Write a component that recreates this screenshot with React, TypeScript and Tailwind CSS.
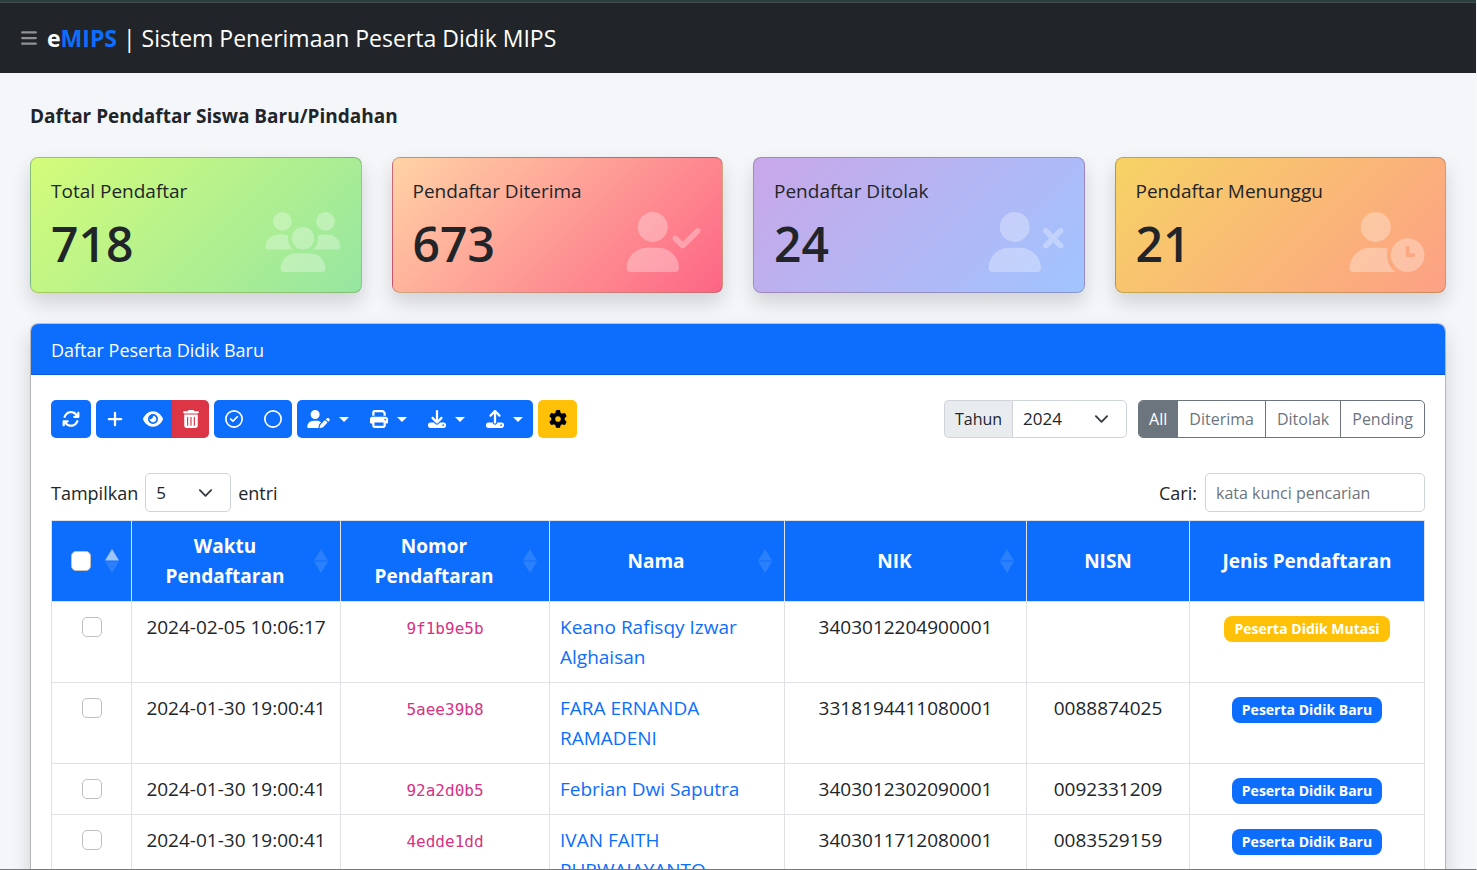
import type { ReactNode } from "react";
import type { IconType } from "react-icons";
import {
  FaArrowsRotate,
  FaBars,
  FaDownload,
  FaEye,
  FaGear,
  FaPlus,
  FaPrint,
  FaRegCircle,
  FaRegCircleCheck,
  FaTrashCan,
  FaUpload,
  FaUserCheck,
  FaUserClock,
  FaUserPen,
  FaUsers,
  FaUserXmark,
} from "react-icons/fa6";

type Stat = { label: string; value: number; icon: IconType; gradient: string };

const stats: Stat[] = [
  { label: "Total Pendaftar", value: 718, icon: FaUsers, gradient: "bg-[linear-gradient(135deg,#d4fc79,#96e6a1)]" },
  { label: "Pendaftar Diterima", value: 673, icon: FaUserCheck, gradient: "bg-[linear-gradient(135deg,#ffd3a5,#fd6585)]" },
  { label: "Pendaftar Ditolak", value: 24, icon: FaUserXmark, gradient: "bg-[linear-gradient(135deg,#c9a7e8,#a0c4ff)]" },
  { label: "Pendaftar Menunggu", value: 21, icon: FaUserClock, gradient: "bg-[linear-gradient(135deg,#f6d365,#fda085)]" },
];

type Row = { time: string; code: string; name: string; nik: string; nisn: string; transfer?: boolean };

const rows: Row[] = [
  { time: "2024-02-05 10:06:17", code: "9f1b9e5b", name: "Keano Rafisqy Izwar Alghaisan", nik: "3403012204900001", nisn: "", transfer: true },
  { time: "2024-01-30 19:00:41", code: "5aee39b8", name: "FARA ERNANDA RAMADENI", nik: "3318194411080001", nisn: "0088874025" },
  { time: "2024-01-30 19:00:41", code: "92a2d0b5", name: "Febrian Dwi Saputra", nik: "3403012302090001", nisn: "0092331209" },
  { time: "2024-01-30 19:00:41", code: "4edde1dd", name: "IVAN FAITH PURWAJAYANTO", nik: "3403011712080001", nisn: "0083529159" },
];

function StatCard({ label, value, icon: Icon, gradient }: Stat) {
  return (
    <section
      className={`flex items-end justify-between rounded-lg border border-black/20 p-5 shadow-[0_10px_20px_rgba(0,0,0,0.15)] ${gradient}`}
    >
      <div>
        <h2 className="text-[19px] leading-[26px] font-medium">{label}</h2>
        <p className="mt-3 text-[48px] leading-[56px] font-semibold">{value}</p>
      </div>
      <Icon className="h-[60px] w-[76px] text-white opacity-30" />
    </section>
  );
}

function ToolButton({
  label,
  icon: Icon,
  className = "w-[38px] bg-[#0d6efd] text-white",
  iconWidth = "w-[18px]",
  menu = false,
}: {
  label: string;
  icon: IconType;
  className?: string;
  iconWidth?: string;
  menu?: boolean;
}) {
  return (
    <button type="button" aria-label={label} className={`flex h-[38px] items-center justify-center gap-[9px] ${className}`}>
      <Icon className={`h-[18px] ${iconWidth}`} />
      {menu && (
        <svg viewBox="0 0 10 5" className="h-[5px] w-[10px] fill-current" aria-hidden="true">
          <path d="M0 0h10L5 5z" />
        </svg>
      )}
    </button>
  );
}

function ButtonGroup({ children }: { children: ReactNode }) {
  return <div className="flex overflow-hidden rounded-[5px]">{children}</div>;
}

function SelectBox({ id, value, className }: { id: string; value: string; className: string }) {
  return (
    <span className={`relative inline-flex h-full ${className}`}>
      <select
        id={id}
        defaultValue={value}
        className="h-full w-full appearance-none rounded-[inherit] border border-[#ced4da] bg-white pl-[10px] text-[17px]"
      >
        <option>{value}</option>
      </select>
      <svg
        viewBox="0 0 16 16"
        className="pointer-events-none absolute top-1/2 right-[18px] size-[15px] -translate-y-1/2 fill-none stroke-[#343a40] stroke-2"
        aria-hidden="true"
      >
        <path strokeLinecap="round" strokeLinejoin="round" d="m2 5 6 6 6-6" />
      </svg>
    </span>
  );
}

function HeadCell({ children, sort }: { children: ReactNode; sort?: "asc" | "none" }) {
  return (
    <th
      scope="col"
      className={`relative border border-[#dee2e6] py-[10px] pl-[10px] font-bold ${sort ? "pr-8" : "pr-[10px]"}`}
    >
      {children}
      {sort && (
        <svg viewBox="0 0 14 24" className="absolute top-1/2 right-3 h-6 w-[14px] -translate-y-1/2 fill-white" aria-hidden="true">
          <path d="M7 0l7 11.5H0z" opacity={sort === "asc" ? 0.6 : 0.125} />
          <path d="M7 24L0 12.5h14z" opacity={0.125} />
        </svg>
      )}
    </th>
  );
}

const checkbox =
  "block size-5 appearance-none rounded-[5px] border border-[#bfbfbf] bg-white checked:border-[#0d6efd] checked:bg-[#0d6efd]";

const cell = "border border-[#dee2e6] p-[10px] align-top";

export default function App() {
  return (
    <div className="flex h-screen flex-col overflow-hidden border-r border-b border-r-[#f8f9fa] border-b-[#777777] bg-[#f5f6fa] font-['Open_Sans','Noto_Sans',sans-serif] text-[18px] leading-[30px] text-[#212529]">
      <div className="h-[3px] shrink-0 border-b border-[#444d4f] bg-[#2a403d]" />
      <header className="flex h-[70px] shrink-0 items-center gap-[9px] bg-[#212529] px-5 text-white">
        <button type="button" aria-label="Menu" className="text-[#909294]">
          <FaBars className="size-[18px]" />
        </button>
        <a href="#" className="text-[23px] leading-9">
          <b>
            e<span className="text-[#0d6efd]">MIPS</span>
          </b>{" "}
          | Sistem Penerimaan Peserta Didik MIPS
        </a>
      </header>

      <main className="min-h-0 flex-1 overflow-y-auto px-[30px] pt-7 [scrollbar-width:none]">
        <h1 className="text-[19px] font-bold">Daftar Pendaftar Siswa Baru/Pindahan</h1>

        <div className="mt-[26px] grid grid-cols-4 gap-[30px]">
          {stats.map((s) => (
            <StatCard key={s.label} {...s} />
          ))}
        </div>

        <section className="mt-[30px] rounded-lg border border-black/20 bg-white bg-clip-padding shadow-[0_10px_20px_rgba(0,0,0,0.15)]">
          <h2 className="rounded-t-[7px] border-b border-[#0b5cd3] bg-[#0d6efd] px-5 pt-[11px] pb-[9px] text-white">
            Daftar Peserta Didik Baru
          </h2>

          <div className="px-5 pt-[25px]">
            <div className="flex items-center justify-between">
              <div className="flex gap-[5px]">
                <ToolButton label="Muat ulang" icon={FaArrowsRotate} className="w-[40px] rounded-[5px] bg-[#0d6efd] text-white" />
                <ButtonGroup>
                  <ToolButton label="Tambah" icon={FaPlus} />
                  <ToolButton label="Lihat" icon={FaEye} iconWidth="w-[20px]" />
                  <ToolButton label="Hapus" icon={FaTrashCan} className="w-[37px] bg-[#dc3545] text-white" />
                </ButtonGroup>
                <ButtonGroup>
                  <ToolButton label="Pilih semua" icon={FaRegCircleCheck} className="w-[39px] bg-[#0d6efd] text-white" />
                  <ToolButton label="Batal pilih" icon={FaRegCircle} className="w-[39px] bg-[#0d6efd] text-white" />
                </ButtonGroup>
                <ButtonGroup>
                  <ToolButton
                    menu
                    label="Ubah status"
                    icon={FaUserPen}
                    iconWidth="w-[23px]"
                    className="w-[62px] bg-[#0d6efd] text-white"
                  />
                  <ToolButton menu label="Cetak" icon={FaPrint} className="w-[58px] bg-[#0d6efd] text-white" />
                  <ToolButton menu label="Unduh" icon={FaDownload} className="w-[58px] bg-[#0d6efd] text-white" />
                  <ToolButton menu label="Unggah" icon={FaUpload} className="w-[58px] bg-[#0d6efd] text-white" />
                </ButtonGroup>
                <ToolButton label="Pengaturan" icon={FaGear} className="w-[39px] rounded-[5px] bg-[#ffc107] text-black" />
              </div>

              <div className="flex h-[38px] gap-[11px] text-[16px]">
                <div className="flex">
                  <label
                    htmlFor="tahun"
                    className="flex items-center rounded-l-[5px] border border-r-0 border-[#ced4da] bg-[#e9ecef] px-[10px]"
                  >
                    Tahun
                  </label>
                  <SelectBox id="tahun" value="2024" className="w-[115px] rounded-r-[5px]" />
                </div>
                <div className="flex divide-x divide-[#6c757d] overflow-hidden rounded-[5px] border border-[#6c757d] text-[#6c757d]">
                  <button type="button" className="bg-[#6c757d] px-[10px] text-white">
                    All
                  </button>
                  <button type="button" className="px-[11px]">
                    Diterima
                  </button>
                  <button type="button" className="px-[11px]">
                    Ditolak
                  </button>
                  <button type="button" className="px-[11px]">
                    Pending
                  </button>
                </div>
              </div>
            </div>

            <div className="mt-[35px] flex h-[39px] items-center justify-between">
              <div className="flex h-full items-center gap-[7px]">
                <label htmlFor="jumlah">Tampilkan</label>
                <SelectBox id="jumlah" value="5" className="w-[86px] rounded-[5px]" />
                <span>entri</span>
              </div>
              <div className="flex h-full items-center gap-2">
                <label htmlFor="cari">Cari:</label>
                <input
                  id="cari"
                  type="search"
                  placeholder="kata kunci pencarian"
                  className="h-full w-[220px] rounded-[5px] border border-[#ced4da] px-[10px] text-[16px] placeholder:text-[#6c757d]"
                />
              </div>
            </div>

            <table className="mt-2 mb-5 w-full table-fixed border-collapse text-center text-[19px]">
              <colgroup>
                <col className="w-[80px]" />
                <col className="w-[209px]" />
                <col className="w-[209px]" />
                <col className="w-[235px]" />
                <col className="w-[242px]" />
                <col className="w-[163px]" />
                <col />
              </colgroup>
              <thead className="bg-[#0d6efd] text-white">
                <tr>
                  <HeadCell sort="asc">
                    <input type="checkbox" aria-label="Pilih semua baris" className={`mx-auto ${checkbox}`} />
                  </HeadCell>
                  <HeadCell sort="none">Waktu Pendaftaran</HeadCell>
                  <HeadCell sort="none">Nomor Pendaftaran</HeadCell>
                  <HeadCell sort="none">Nama</HeadCell>
                  <HeadCell sort="none">NIK</HeadCell>
                  <HeadCell>NISN</HeadCell>
                  <HeadCell>Jenis Pendaftaran</HeadCell>
                </tr>
              </thead>
              <tbody>
                {rows.map((r) => (
                  <tr key={r.code}>
                    <td className={cell}>
                      <div className="flex h-[30px] items-center justify-center">
                        <input type="checkbox" aria-label={`Pilih ${r.name}`} className={checkbox} />
                      </div>
                    </td>
                    <td className={cell}>{r.time}</td>
                    <td className={cell}>
                      <code className="block h-[30px] font-['DejaVu_Sans_Mono',monospace] text-[16px] leading-[34px] text-[#d63384]">
                        {r.code}
                      </code>
                    </td>
                    <td className={`${cell} text-left`}>
                      <a href="#" className="text-[#0d6efd]">
                        {r.name}
                      </a>
                    </td>
                    <td className={cell}>{r.nik}</td>
                    <td className={cell}>{r.nisn}</td>
                    <td className={cell}>
                      <div className="flex h-[30px] items-center justify-center pt-1">
                        <span
                          className={`rounded-lg px-[10px] text-[14px] leading-[26px] font-bold text-white ${
                            r.transfer ? "bg-[#ffc107]" : "bg-[#0d6efd]"
                          }`}
                        >
                          {r.transfer ? "Peserta Didik Mutasi" : "Peserta Didik Baru"}
                        </span>
                      </div>
                    </td>
                  </tr>
                ))}
              </tbody>
            </table>
          </div>
        </section>
      </main>
    </div>
  );
}
